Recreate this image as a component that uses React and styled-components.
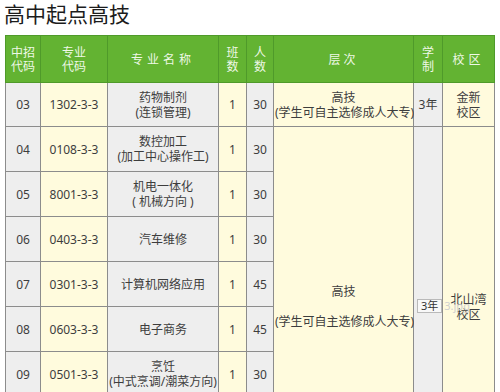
import styled, { createGlobalStyle } from 'styled-components'

const Global = createGlobalStyle`
    body {
        margin: 0;
        background: #ffffff;
        font-family: "Noto Sans", "Noto Sans CJK SC", sans-serif;
        overflow: hidden;
    }
`

const Page = styled.div`
    padding: 0 6px 0 5px;
    height: 392px;
    overflow: hidden;
`

const Title = styled.h1`
    margin: 1px 0 9px -1px;
    font-size: 21px;
    line-height: 25px;
    font-weight: 400;
    color: #1c1c1c;
    font-family: "Noto Sans CJK SC", sans-serif;
`

const Table = styled.table`
    width: 489px;
    table-layout: fixed;
    border-collapse: collapse;
    border: 1px solid #8c8c8c;
`

const HeadRow = styled.tr`
    height: 47px;
`

const HeadCell = styled.th`
    background: #63b332;
    color: #eef8e6;
    font-weight: 400;
    font-size: 12px;
    line-height: 14px;
    letter-spacing: ${p => p.$spread || 0}px;
    border: 1px solid #4f9a2a;
    padding: 0;
    text-align: center;
    font-family: "Noto Sans CJK SC", sans-serif;
`

const Row = styled.tr`
    height: ${p => p.$h || 45}px;
`

const Cell = styled.td`
    position: relative;
    background: ${p => (p.$tone === 'grey' ? '#eeeeee' : '#fffbdd')};
    color: #3d3d3d;
    font-size: 12px;
    line-height: 15px;
    border: 1px solid #8c8c8c;
    padding: 0 1px;
    text-align: center;
    vertical-align: middle;
    white-space: nowrap;
    font-family: "Noto Sans", "Noto Sans CJK SC", sans-serif;
`

const Gap = styled.div`
    height: 15px;
`

const Tip = styled.div`
    position: absolute;
    top: 50%;
    left: 3px;
    transform: translateY(-8px);
    display: flex;
    align-items: center;
    z-index: 2;
    font-size: 11px;
    line-height: 12px;
`

const TipBox = styled.span`
    background: rgba(248, 248, 248, 0.92);
    border: 1px solid #b9b9b9;
    padding: 0 3px;
    color: #333;
`

const TipFile = styled.span`
    color: #cfcfcf;
    padding-left: 2px;
`

const cols = [35, 67, 111, 28, 27, 140, 29, 52]

const rows = [
    ['04', '0108-3-3', ['数控加工', '(加工中心操作工)'], '1', '30'],
    ['05', '8001-3-3', ['机电一体化', '( 机械方向 )'], '1', '30'],
    ['06', '0403-3-3', ['汽车维修'], '1', '30'],
    ['07', '0301-3-3', ['计算机网络应用'], '1', '45'],
    ['08', '0603-3-3', ['电子商务'], '1', '45'],
    ['09', '0501-3-3', ['烹饪', '(中式烹调/潮菜方向)'], '1', '30'],
    ['10', '0901-3-3', ['服装设计与制作'], '1', '30'],
    ['11', '1103-3-3', ['会计'], '1', '45'],
]

function Lines({ items }) {
    return items.map((t, i) => <div key={i}>{t}</div>)
}

export default function App() {
    return (
        <Page>
            <Global />
            <Title>高中起点高技</Title>
            <Table>
                <colgroup>
                    {cols.map((w, i) => <col key={i} style={{ width: w }} />)}
                </colgroup>
                <thead>
                    <HeadRow>
                        <HeadCell>中招<br />代码</HeadCell>
                        <HeadCell>专业<br />代码</HeadCell>
                        <HeadCell $spread={4}>专业名称</HeadCell>
                        <HeadCell>班<br />数</HeadCell>
                        <HeadCell>人<br />数</HeadCell>
                        <HeadCell $spread={3}>层次</HeadCell>
                        <HeadCell>学<br />制</HeadCell>
                        <HeadCell $spread={4}>校区</HeadCell>
                    </HeadRow>
                </thead>
                <tbody>
                    <Row $h={44}>
                        <Cell $tone="grey">03</Cell>
                        <Cell>1302-3-3</Cell>
                        <Cell $tone="grey"><Lines items={['药物制剂', '(连锁管理)']} /></Cell>
                        <Cell>1</Cell>
                        <Cell $tone="grey">30</Cell>
                        <Cell><Lines items={['高技', '(学生可自主选修成人大专)']} /></Cell>
                        <Cell $tone="grey">3年</Cell>
                        <Cell><Lines items={['金新', '校区']} /></Cell>
                    </Row>
                    {rows.map((r, i) => (
                        <Row key={r[0]}>
                            <Cell $tone="grey">{r[0]}</Cell>
                            <Cell>{r[1]}</Cell>
                            <Cell $tone="grey"><Lines items={r[2]} /></Cell>
                            <Cell>{r[3]}</Cell>
                            <Cell $tone="grey">{r[4]}</Cell>
                            {i === 0 && (
                                <>
                                    <Cell rowSpan={rows.length}>
                                        <div>高技</div>
                                        <Gap />
                                        <div>(学生可自主选修成人大专)</div>
                                    </Cell>
                                    <Cell $tone="grey" rowSpan={rows.length}>
                                        <Tip>
                                            <TipBox>3年</TipBox>
                                            <TipFile>3.jpg</TipFile>
                                        </Tip>
                                    </Cell>
                                    <Cell rowSpan={rows.length}><Lines items={['北山湾', '校区']} /></Cell>
                                </>
                            )}
                        </Row>
                    ))}
                </tbody>
            </Table>
        </Page>
    )
}
